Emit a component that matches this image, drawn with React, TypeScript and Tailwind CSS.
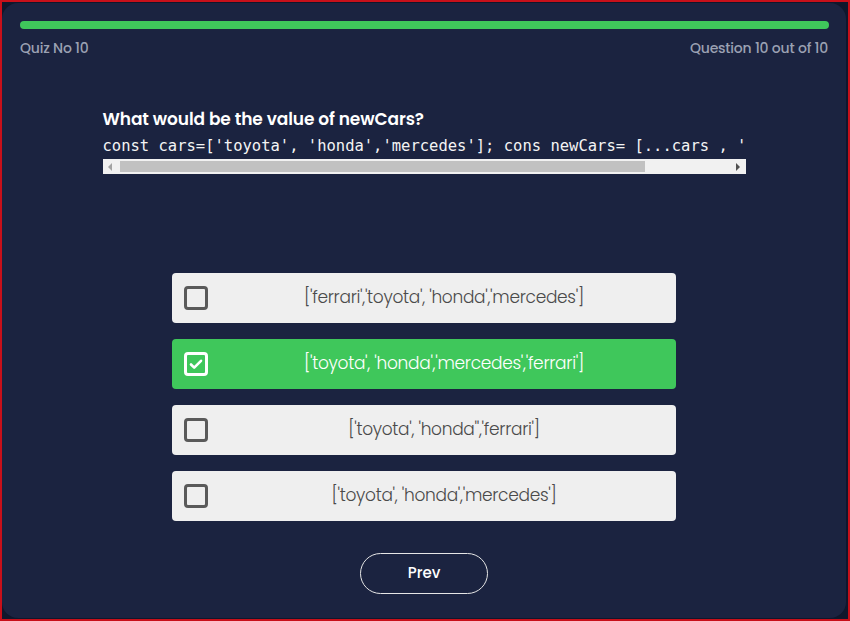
const options = [
  { text: "['ferrari','toyota', 'honda','mercedes']", selected: false },
  { text: "['toyota', 'honda','mercedes','ferrari']", selected: true },
  { text: "['toyota', 'honda'','ferrari']", selected: false },
  { text: "['toyota', 'honda','mercedes']", selected: false },
];

function Checkbox({ checked }: { checked: boolean }) {
  if (checked) {
    return (
      <div className="flex h-6 w-6 shrink-0 items-center justify-center rounded-[4px] border-[3px] border-white">
        <svg viewBox="0 0 16 16" className="h-4 w-4" fill="none" stroke="white" strokeWidth="2.6" strokeLinecap="round" strokeLinejoin="round">
          <path d="M3 8.5l3.2 3.2L13 4.8" />
        </svg>
      </div>
    );
  }
  return <div className="h-6 w-6 shrink-0 rounded-[4px] border-[3px] border-[#5a5a5a]" />;
}

function FakeScrollbar() {
  return (
    <div className="flex h-[15px] items-center bg-[#f1f1f1]">
      <div className="flex h-[15px] w-[15px] items-center justify-center">
        <div className="h-0 w-0 border-y-[4px] border-r-[4px] border-y-transparent border-r-[#a3a3a3]" />
      </div>
      <div className="ml-[2px] h-[11px] w-[525px] bg-[#c1c1c1]" />
      <div className="flex-1" />
      <div className="flex h-[15px] w-[15px] items-center justify-center">
        <div className="h-0 w-0 border-y-[4px] border-l-[4px] border-y-transparent border-l-[#505050]" />
      </div>
    </div>
  );
}

export default function App() {
  return (
    <div className="h-[621px] w-[850px] border-2 border-[#c8101a] bg-[#10172c] pt-px pr-[2px] pb-px font-['Poppins','Inter',sans-serif]">
      <div className="flex h-full flex-col rounded-2xl bg-[#1b2340] px-[18px] pt-[18px]">
        <div className="-mr-px h-2 rounded-full bg-[#3fc75b]" />
        <div className="mt-[10px] flex justify-between text-[14px] font-medium leading-[18px] tracking-[-0.2px] text-[#9ba1b3]">
          <span>Quiz No 10</span>
          <span>Question 10 out of 10</span>
        </div>

        <div className="mx-auto mt-[50px] w-[643px]">
          <h2 className="text-[17px] font-semibold leading-6 tracking-[-0.1px] text-white">
            What would be the value of newCars?
          </h2>
          <pre className="mt-1 overflow-hidden whitespace-pre font-['DejaVu_Sans_Mono','Liberation_Mono',monospace] text-[15.5px] leading-[22px] text-[#f4f4f4]">
            const cars=['toyota', 'honda','mercedes']; cons newCars= [...cars , '
          </pre>
          <div className="mt-[2px]">
            <FakeScrollbar />
          </div>
        </div>

        <div className="mx-auto mt-[99px] flex w-[504px] flex-col gap-4">
          {options.map((o) => (
            <div
              key={o.text}
              className={`flex h-[50px] items-center rounded-[4px] pl-3 ${
                o.selected ? "bg-[#3fc75b] text-white" : "bg-[#efefef] text-[#4a4a4a]"
              }`}
            >
              <Checkbox checked={o.selected} />
              <span className="ml-1 flex-1 text-center text-[17px] font-light tracking-[-0.3px]">{o.text}</span>
            </div>
          ))}
        </div>

        <div className="mt-8 flex justify-center">
          <button className="h-[41px] w-[128px] rounded-full border border-[#e6e6e6] text-[15px] font-medium text-white">
            Prev
          </button>
        </div>
      </div>
    </div>
  );
}
